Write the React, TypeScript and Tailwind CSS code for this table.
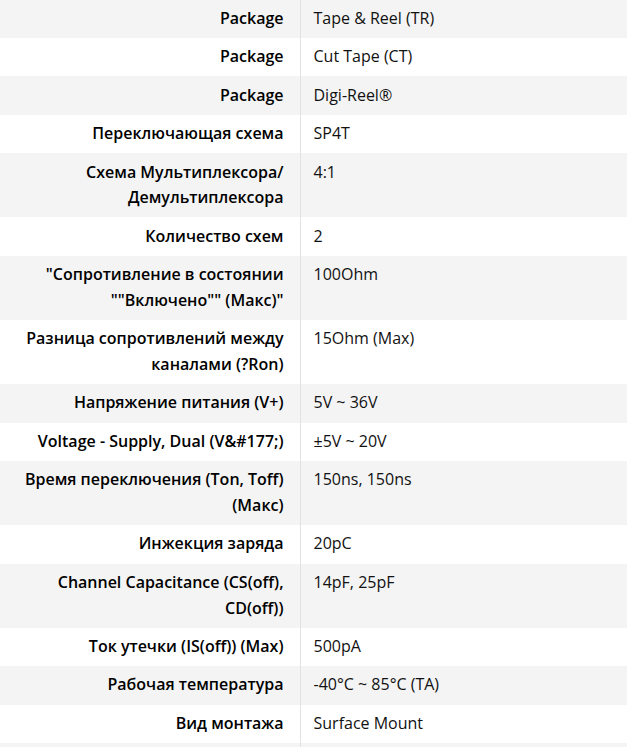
import React from "react";

interface Spec {
  label: string[];
  value: string;
}

const specs: Spec[] = [
  { label: ["Package"], value: "Tape & Reel (TR)" },
  { label: ["Package"], value: "Cut Tape (CT)" },
  { label: ["Package"], value: "Digi-Reel®" },
  { label: ["Переключающая схема"], value: "SP4T" },
  { label: ["Схема Мультиплексора/", "Демультиплексора"], value: "4:1" },
  { label: ["Количество схем"], value: "2" },
  { label: ['"Сопротивление в состоянии', '""Включено"" (Макс)"'], value: "100Ohm" },
  { label: ["Разница сопротивлений между", "каналами (?Ron)"], value: "15Ohm (Max)" },
  { label: ["Напряжение питания (V+)"], value: "5V ~ 36V" },
  { label: ["Voltage - Supply, Dual (V&#177;)"], value: "±5V ~ 20V" },
  { label: ["Время переключения (Ton, Toff)", "(Макс)"], value: "150ns, 150ns" },
  { label: ["Инжекция заряда"], value: "20pC" },
  { label: ["Channel Capacitance (CS(off),", "CD(off))"], value: "14pF, 25pF" },
  { label: ["Ток утечки (IS(off)) (Max)"], value: "500pA" },
  { label: ["Рабочая температура"], value: "-40°C ~ 85°C (TA)" },
  { label: ["Вид монтажа"], value: "Surface Mount" },
  { label: ["\u00a0"], value: "\u00a0" },
];

export default function App() {
  return (
    <div className="w-[627px] bg-white font-['Open_Sans',sans-serif] text-[16px] leading-[25.6px] text-[#111]">
      <table className="-mt-[0.5px] w-full border-collapse">
        <tbody>
          {specs.map((row, i) => (
            <tr key={i} className={i % 2 === 0 ? "bg-[#f4f4f4]" : "bg-white"}>
              <th className="w-[300px] border-r border-[#e2e2e2] py-[6.45px] pl-4 pr-4 text-right align-top font-semibold text-black">
                {row.label.map((line, j) => (
                  <div key={j} className="whitespace-nowrap">
                    {line}
                  </div>
                ))}
              </th>
              <td className="py-[6.45px] pl-[13px] pr-4 text-left align-top">{row.value}</td>
            </tr>
          ))}
        </tbody>
      </table>
    </div>
  );
}
